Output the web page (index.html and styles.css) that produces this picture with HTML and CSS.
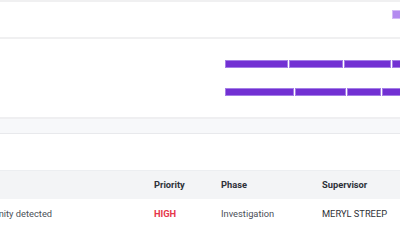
FILE: index.html
```html
<!DOCTYPE html>
<html>
<head>
<meta charset="utf-8">
<link rel="stylesheet" href="styles.css">
</head>
<body>
<div class="page">
  <div class="legend">
    <span class="swatch"></span>
  </div>
  <div class="chart">
    <div class="track">
      <span class="seg" style="width:63px"></span>
      <span class="seg" style="width:54px"></span>
      <span class="seg" style="width:47px"></span>
      <span class="seg" style="width:60px"></span>
    </div>
    <div class="track">
      <span class="seg" style="width:69px"></span>
      <span class="seg" style="width:51px"></span>
      <span class="seg" style="width:34px"></span>
      <span class="seg" style="width:60px"></span>
    </div>
  </div>
  <div class="strip"></div>
  <div class="spacer"></div>
  <div class="table">
    <div class="row head">
      <div class="cell"></div>
      <div class="cell">Priority</div>
      <div class="cell">Phase</div>
      <div class="cell">Supervisor</div>
    </div>
    <div class="row body">
      <div class="cell desc">Opportunity detected</div>
      <div class="cell high">HIGH</div>
      <div class="cell">Investigation</div>
      <div class="cell name">MERYL STREEP</div>
    </div>
  </div>
</div>
</body>
</html>
```
FILE: styles.css
```css
html, body {
  margin: 0;
  padding: 0;
  background: #ffffff;
  overflow: hidden;
}
body {
  width: 400px;
  height: 250px;
  font-family: Roboto, "Liberation Sans", sans-serif;
}
.page {
  width: 420px;
  border-top: 2px solid #f0f0f1;
}
.legend {
  height: 37px;
  display: flex;
  padding-left: 392px;
  padding-top: 8px;
  box-sizing: border-box;
  border-bottom: 2px solid #f0f0f1;
}
.swatch {
  width: 10px;
  height: 9px;
  box-sizing: border-box;
  background: #b48bf0;
  border: 1px solid #d3bbf6;
}
.chart {
  height: 80px;
  box-sizing: border-box;
  padding: 21px 0 0 225px;
  display: flex;
  flex-direction: column;
  gap: 20px;
  border-bottom: 2px solid #efeff1;
}
.track {
  display: flex;
  gap: 1px;
  height: 8px;
}
.seg {
  display: block;
  flex: none;
  height: 8px;
  box-sizing: border-box;
  background: #7230d3;
  border: 1px solid #a47ee6;
}
.strip {
  height: 14px;
  background: #f7f8fa;
  border-bottom: 1px solid #e8e9ec;
}
.spacer {
  height: 36px;
}
.table {
  margin-left: -47px;
  border-top: 1px solid #eceef1;
}
.row {
  display: grid;
  grid-template-columns: 201px 67px 101px 1fr;
  font-size: 9.3px;
  line-height: 12px;
}
.head {
  background: #f3f4f6;
  font-weight: 700;
  color: #2d3139;
}
.head .cell {
  padding: 8px 0 8px 0;
}
.body .cell {
  padding: 9px 0 9px 0;
  color: #4b5058;
}
.cell:first-child {
  padding-left: 12px;
}
.high {
  font-weight: 700;
  color: #e5364a !important;
}
.name {
  color: #2f3237 !important;
}
```
